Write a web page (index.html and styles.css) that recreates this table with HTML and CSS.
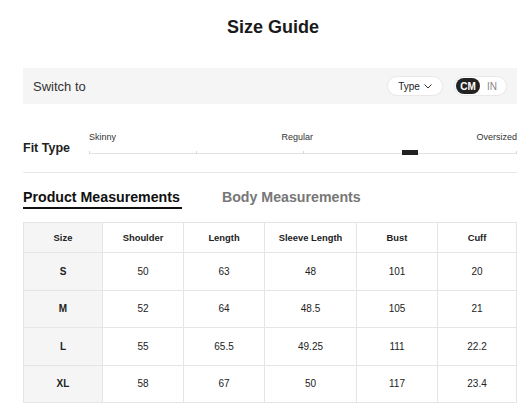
FILE: index.html
```html
<!DOCTYPE html>
<html lang="en">
<head>
<meta charset="utf-8">
<title>Size Guide</title>
<link rel="stylesheet" href="styles.css">
</head>
<body>
<div class="page">
  <h1 class="title">Size Guide</h1>

  <div class="switch-bar">
    <span class="switch-label">Switch to</span>
    <div class="switch-controls">
      <button class="type-pill">Type
        <svg class="chev" width="8" height="5" viewBox="0 0 8 5"><path d="M0.5 0.5 L4 4 L7.5 0.5" fill="none" stroke="#333" stroke-width="1"/></svg>
      </button>
      <div class="unit-toggle">
        <span class="unit active">CM</span>
        <span class="unit">IN</span>
      </div>
    </div>
  </div>

  <div class="fit">
    <div class="fit-label">Fit Type</div>
    <div class="fit-scale">
      <div class="fit-names">
        <span>Skinny</span>
        <span>Regular</span>
        <span>Oversized</span>
      </div>
      <div class="fit-track">
        <i class="tick t0"></i><i class="tick t1"></i><i class="tick t2"></i><i class="tick t3"></i><i class="tick t4"></i>
        <b class="marker"></b>
      </div>
    </div>
  </div>

  <div class="divider"></div>

  <div class="tabs">
    <span class="tab active">Product Measurements</span>
    <span class="tab">Body Measurements</span>
  </div>

  <table class="sizes">
    <thead>
      <tr><th>Size</th><th>Shoulder</th><th>Length</th><th>Sleeve Length</th><th>Bust</th><th>Cuff</th></tr>
    </thead>
    <tbody>
      <tr><th>S</th><td>50</td><td>63</td><td>48</td><td>101</td><td>20</td></tr>
      <tr><th>M</th><td>52</td><td>64</td><td>48.5</td><td>105</td><td>21</td></tr>
      <tr><th>L</th><td>55</td><td>65.5</td><td>49.25</td><td>111</td><td>22.2</td></tr>
      <tr><th>XL</th><td>58</td><td>67</td><td>50</td><td>117</td><td>23.4</td></tr>
    </tbody>
  </table>
</div>
</body>
</html>
```

FILE: styles.css
```css
* { box-sizing: border-box; }
body {
  margin: 0;
  background: #fff;
  font-family: "Liberation Sans", Arial, sans-serif;
  color: #222;
}
.page {
  padding: 16px 10px 0 23px;
}
.title {
  margin: 0;
  text-align: center;
  font-size: 18px;
  line-height: 22px;
  font-weight: 700;
  color: #1a1a1a;
  padding-left: 6px;
}
.switch-bar {
  margin-top: 30px;
  height: 36px;
  background: #f5f5f5;
  display: flex;
  align-items: center;
  justify-content: space-between;
  padding: 0 10px;
}
.switch-label {
  font-size: 13px;
  color: #333;
}
.switch-controls {
  display: flex;
  align-items: center;
  gap: 11px;
}
.type-pill {
  height: 20px;
  width: 56px;
  border: 1px solid #e8e8e8;
  border-radius: 10px;
  background: #fff;
  font-family: inherit;
  font-size: 10px;
  color: #222;
  display: flex;
  align-items: center;
  justify-content: center;
  gap: 4px;
  padding: 0;
}
.chev { display: block; }
.unit-toggle {
  height: 20px;
  width: 53px;
  border: 1px solid #e8e8e8;
  border-radius: 10px;
  background: #fff;
  display: flex;
  align-items: center;
  padding: 0 1px;
}
.unit {
  height: 16px;
  width: 24px;
  border-radius: 8px;
  display: flex;
  align-items: center;
  justify-content: center;
  font-size: 10px;
  color: #888;
}
.unit.active {
  background: #222;
  color: #fff;
  font-weight: 700;
}
.fit {
  display: flex;
  align-items: flex-end;
  margin-top: 27px;
}
.fit-label {
  width: 66px;
  flex: none;
  font-size: 12.5px;
  line-height: 13px;
  font-weight: 700;
  color: #222;
}
.fit-scale {
  flex: 1;
}
.fit-names {
  display: flex;
  justify-content: space-between;
  font-size: 9px;
  line-height: 12px;
  color: #333;
}
.fit-names span:nth-child(2) { transform: translateX(1px); }
.fit-track {
  position: relative;
  margin-top: 7px;
  height: 5px;
}
.fit-track::before {
  content: "";
  position: absolute;
  left: 0;
  right: 0;
  top: 3px;
  height: 1px;
  background: #e3e3e3;
}
.tick {
  position: absolute;
  top: 1px;
  width: 1px;
  height: 3px;
  background: #d8d8d8;
}
.t0 { left: 0; }
.t1 { left: 25%; }
.t2 { left: 50%; }
.t3 { left: 75%; }
.t4 { right: 0; }
.marker {
  position: absolute;
  top: 0;
  left: 75%;
  width: 16px;
  height: 5px;
  margin-left: -8px;
  background: #222;
}
.divider {
  margin-top: 17px;
  height: 1px;
  background: #e8e8e8;
}
.tabs {
  margin-top: 16px;
  display: flex;
  gap: 40px;
}
.tab {
  font-size: 14.2px;
  line-height: 16px;
  font-weight: 700;
  color: #777;
  padding-bottom: 2px;
  border-bottom: 2px solid transparent;
}
.tab.active {
  color: #111;
  border-bottom-color: #111;
  padding-right: 2px;
}
.sizes {
  margin-top: 13px;
  width: 100%;
  border-collapse: collapse;
  table-layout: fixed;
  font-size: 10px;
  color: #222;
}
.sizes th, .sizes td {
  border: 1px solid #e5e5e5;
  text-align: center;
  padding: 0;
}
.sizes thead th {
  height: 30px;
  font-size: 9.4px;
  font-weight: 700;
}
.sizes tbody tr { height: 37.5px; }
.sizes tbody th {
  font-weight: 700;
  font-size: 10px;
}
.sizes th:first-child { background: #f5f5f5; }
.sizes th:nth-child(1) { width: 79px; }
.sizes th:nth-child(2) { width: 81px; }
.sizes th:nth-child(3) { width: 81px; }
.sizes th:nth-child(4) { width: 92px; }
.sizes th:nth-child(5) { width: 81px; }
```
